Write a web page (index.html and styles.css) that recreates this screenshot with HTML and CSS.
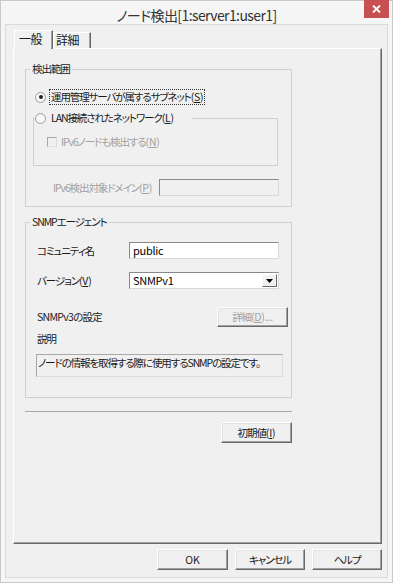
FILE: index.html
```html
<!DOCTYPE html>
<html lang="ja">
<head>
<meta charset="utf-8">
<title>ノード検出</title>
<link rel="stylesheet" href="styles.css">
</head>
<body>
<div class="window">
  <div class="titlebar">
    <span class="title">ノード検出[1:server1:user1]</span>
    <span class="close"><svg width="9" height="8" viewBox="0 0 9 8"><path d="M1 0.5L8 7.5M8 0.5L1 7.5" stroke="#fff" stroke-width="1.8" fill="none"/></svg></span>
  </div>
  <div class="client">
    <div class="tabs">
      <div class="tab active">一般</div>
      <div class="tab">詳細</div>
    </div>
    <div class="panel">
      <fieldset class="group g1">
        <legend>検出範囲</legend>
        <div class="radio-row first">
          <span class="radio checked"></span>
          <span class="focus">運用管理サーバが属するサブネット<span class="key">(<u>S</u>)</span></span>
        </div>
        <fieldset class="subgroup">
          <legend>
            <span class="radio-row">
              <span class="radio"></span>
              <span class="lbl">LAN接続されたネットワーク<span class="key">(<u>L</u>)</span></span>
            </span>
          </legend>
          <div class="check-row disabled">
            <span class="check"></span>
            <span>IPv6ノードも検出する<span class="key">(<u>N</u>)</span></span>
          </div>
        </fieldset>
        <div class="domain-row disabled">
          <span class="nowrap">IPv6検出対象ドメイン<span class="key">(<u>P</u>)</span></span>
          <span class="input input-disabled"></span>
        </div>
      </fieldset>

      <fieldset class="group g2">
        <legend>SNMPエージェント</legend>
        <div class="form-row r1">
          <span class="flabel">コミュニティ名</span>
          <span class="input">public</span>
        </div>
        <div class="form-row r2">
          <span class="flabel">バージョン<span class="key">(<u>V</u>)</span></span>
          <span class="input select">SNMPv1<span class="drop"><svg width="7" height="4" viewBox="0 0 7 4"><path d="M0 0H7L3.5 4Z" fill="#000"/></svg></span></span>
        </div>
        <div class="form-row r3">
          <span class="flabel latin">SNMPv3の設定</span>
          <span class="btn btn-disabled btn-detail">詳細<span class="key">(<u>D</u>)...</span></span>
        </div>
        <div class="desc-label">説明</div>
        <div class="desc-box">ノードの情報を取得する際に使用するSNMPの設定です。</div>
      </fieldset>

      <div class="sep"></div>
      <div class="reset-row"><span class="btn btn-reset">初期値<span class="key">(<u>I</u>)</span></span></div>
    </div>
    <div class="buttons">
      <span class="btn btn-ok">OK</span>
      <span class="btn btn-cancel">キャンセル</span>
      <span class="btn btn-help">ヘルプ</span>
    </div>
  </div>
</div>
</body>
</html>
```
FILE: styles.css
```css
* { box-sizing: border-box; }
html, body { margin: 0; padding: 0; }
body {
  width: 393px;
  height: 583px;
  font-family: "Noto Sans CJK JP", "Noto Sans", sans-serif;
  font-size: 10.5px;
  line-height: 14px;
  letter-spacing: -1.1px;
  color: #1a1a1a;
  font-feature-settings: "palt";
  background: #f4f4f4;
}
u { text-decoration: underline; text-underline-offset: 1px; }
.key { letter-spacing: -0.2px; }
.nowrap { white-space: nowrap; }
.latin { letter-spacing: -0.7px; }

.window {
  width: 393px;
  height: 583px;
  border: 1px solid #c8c8c8;
  background: #f5f5f5;
  display: flex;
  flex-direction: column;
}
.titlebar {
  height: 23px;
  display: grid;
  grid-template-columns: 1fr auto 1fr;
  align-items: start;
}
.title {
  grid-column: 2;
  font-size: 14px;
  line-height: 16px;
  letter-spacing: -0.6px;
  margin-top: 6px;
  color: #333;
}
.close {
  grid-column: 3;
  justify-self: end;
  width: 25px;
  height: 18px;
  margin-right: 3px;
  margin-top: -1px;
  background: #c75050;
  display: flex;
  align-items: center;
  justify-content: center;
}

.client {
  flex: 1;
  margin: 0 4px 4px;
  border: 1px solid #dadada;
  background: #f0f0f0;
  padding: 5px 5px 0 7px;
  display: flex;
  flex-direction: column;
}

.tabs {
  display: flex;
  height: 18px;
  padding-left: 1px;
  align-items: flex-end;
}
.tab {
  height: 16px;
  width: 38px;
  padding-left: 2px;
  border-top: 1px solid #fff;
  border-left: 1px solid #fff;
  border-right: 1px solid #696969;
  box-shadow: inset -1px 0 #a0a0a0;
  line-height: 14px;
  font-size: 12px;
  letter-spacing: -0.5px;
  background: #f0f0f0;
}
.tab.active {
  height: 19px;
  width: 39px;
  padding-left: 4px;
  padding-top: 1px;
  margin-bottom: -1px;
  position: relative;
  z-index: 1;
}

.panel {
  height: 496px;
  border-top: 1px solid #fff;
  border-left: 1px solid #fff;
  border-right: 1px solid #696969;
  border-bottom: 1px solid #696969;
  box-shadow: inset -1px -1px 0 #a0a0a0;
  padding: 13px 0 0 11px;
}

.group {
  width: 267px;
  margin: 0;
  padding: 0;
  min-width: 0;
  border: 1px solid #d0d0d0;
}
.group > legend {
  margin-left: 4px;
  padding: 0 2px;
  height: 14px;
  line-height: 14px;
}
.g1 { padding-bottom: 10px; }
.g2 { margin-top: 8px; padding-bottom: 20px; }

.radio-row {
  display: flex;
  align-items: center;
  height: 16px;
}
.radio-row.first { margin-top: 13px; margin-left: 9px; }
.radio {
  width: 11px;
  height: 11px;
  border-radius: 50%;
  border: 1px solid #9c9c9c;
  background: #f7f7f7;
  margin-right: 4px;
  display: flex;
  align-items: center;
  justify-content: center;
  flex: none;
}
.radio.checked::after {
  content: "";
  width: 4px;
  height: 4px;
  border-radius: 50%;
  background: #222;
}
.focus {
  outline: 1px dotted #333;
  outline-offset: 0;
  padding: 0 1px;
  line-height: 14px;
}

.subgroup {
  margin: 5px 0 0 7px;
  padding: 0 0 15px 0;
  width: 245px;
  min-width: 0;
  border: 1px solid #d0d0d0;
}
.subgroup > legend {
  margin-left: 1px;
  padding: 0 18px 0 0;
  height: 16px;
}
.subgroup .lbl { padding-left: 1px; }

.disabled { color: #a0a0a0; }
.check-row {
  display: flex;
  align-items: center;
  height: 16px;
  margin: 8px 0 0 13px;
}
.check {
  width: 10px;
  height: 10px;
  border: 1px solid;
  border-color: #a8a8a8 #dedede #dedede #a8a8a8;
  background: #f0f0f0;
  margin-right: 4px;
  flex: none;
}

.domain-row {
  display: flex;
  align-items: center;
  height: 17px;
  margin: 13px 12px 0 27px;
}
.input {
  margin-left: auto;
  width: 150px;
  height: 17px;
  border: 1px solid;
  border-color: #8a8a8a #d8d8d8 #d8d8d8 #8a8a8a;
  background: #fff;
  color: #000;
  padding-left: 3px;
  line-height: 15px;
  font-size: 11px;
  letter-spacing: -0.3px;
  display: flex;
  align-items: center;
}
.input-disabled {
  width: 120px;
  background: #f0f0f0;
}

.form-row {
  display: flex;
  align-items: center;
  margin: 0 12px 0 11px;
}
.r1 { margin-top: 13px; height: 17px; }
.r2 { margin-top: 13px; height: 17px; }
.r3 { margin-top: 18px; height: 20px; margin-right: 3px; }
.drop {
  margin-left: auto;
  width: 15px;
  height: 13px;
  margin-right: 1px;
  border: 1px solid;
  border-color: #fff #696969 #696969 #fff;
  background: #f0f0f0;
  display: flex;
  align-items: center;
  justify-content: center;
}

.btn {
  display: inline-flex;
  align-items: center;
  justify-content: center;
  height: 21px;
  border: 1px solid;
  border-color: #fff #696969 #696969 #fff;
  box-shadow: inset -1px -1px 0 #a0a0a0, inset 1px 1px 0 #e3e3e3;
  background: #f0f0f0;
  color: #1a1a1a;
  line-height: 14px;
}
.btn-disabled { color: #a0a0a0; }
.btn-detail { margin-left: auto; width: 71px; height: 20px; }

.desc-label { margin: 5px 0 0 11px; height: 14px; }
.desc-box {
  margin: 8px 0 0 10px;
  width: 247px;
  height: 23px;
  border: 1px solid;
  border-color: #a8a8a8 #dcdcdc #dcdcdc #a8a8a8;
  padding: 1px 0 0 1px;
  line-height: 14px;
  white-space: nowrap;
  overflow: hidden;
}

.sep {
  width: 267px;
  height: 1px;
  margin-top: 13px;
  background: #a8a8a8;
}
.reset-row {
  width: 267px;
  margin-top: 10px;
  display: flex;
  justify-content: flex-end;
}
.btn-reset { width: 71px; }

.buttons {
  display: flex;
  justify-content: flex-end;
  gap: 7px;
  margin-top: 5px;
}
.btn-ok { width: 71px; letter-spacing: 0; }
.btn-cancel { width: 70px; }
.btn-help { width: 70px; }
```
